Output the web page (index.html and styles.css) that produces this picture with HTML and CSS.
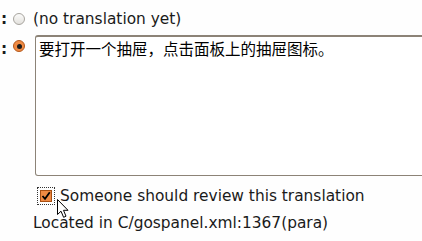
FILE: index.html
```html
<!DOCTYPE html>
<html>
<head>
<meta charset="utf-8">
<link rel="stylesheet" href="styles.css">
</head>
<body>
<div class="page">
  <div class="row row-top">
    <span class="colon">:</span>
    <span class="radio"></span>
    <span class="label">(no translation yet)</span>
  </div>
  <div class="row row-edit">
    <span class="colon">:</span>
    <span class="radio on"><span class="dot"></span></span>
    <div class="editor">要打开一个抽屉，点击面板上的抽屉图标。</div>
  </div>
  <div class="row row-check">
    <span class="focus"><span class="check">
      <svg width="10" height="10" viewBox="0 0 10 10"><path d="M1.5 5 L4 7.8 L8.8 1.2" fill="none" stroke="#000" stroke-width="1.8"/></svg>
    </span></span>
    <span class="label">Someone should review this translation</span>
  </div>
  <div class="located">Located in C/gospanel.xml:1367(para)</div>
  <svg class="cursor" width="14" height="20" viewBox="0 0 14 20"><path d="M0.5 0.5 L0.5 15.5 L4 12.2 L6.6 18.3 L9 17.2 L6.5 11.3 L11 11.3 Z" fill="#fff" stroke="#000" stroke-width="1"/></svg>
</div>
</body>
</html>
```
FILE: styles.css
```css
html, body {
  margin: 0;
  padding: 0;
  background: #fefefe;
  overflow: hidden;
}
.page {
  position: relative;
  width: 422px;
  height: 241px;
  font-family: "DejaVu Sans", sans-serif;
  font-size: 15.4px;
  color: #1a1a1a;
}
.row {
  display: flex;
}
.row-top {
  align-items: center;
  height: 26px;
  padding-top: 6px;
}
.colon {
  width: 13px;
  padding-left: 1px;
  font-weight: bold;
  box-sizing: border-box;
}
.radio {
  width: 12px;
  height: 12px;
  border-radius: 50%;
  border: 1px solid #a7a49e;
  background: linear-gradient(#fbfbfa, #e3e1dd);
  box-sizing: border-box;
  margin-right: 8px;
  display: flex;
  align-items: center;
  justify-content: center;
}
.radio.on {
  border-color: #b45a1e;
  background: #f08a43;
}
.radio .dot {
  width: 5px;
  height: 5px;
  border-radius: 50%;
  background: #1a1a1a;
}
.row-edit {
  align-items: flex-start;
  margin-top: 3px;
}
.row-edit .colon {
  margin-top: 6px;
  line-height: 16px;
}
.row-edit .radio {
  margin-top: 5px;
  margin-right: 10px;
}
.editor {
  flex: 1;
  height: 141px;
  margin-right: -20px;
  border: 1px solid #8c8377;
  border-top: 2px solid #8c8377;
  border-radius: 3px;
  box-sizing: border-box;
  padding: 1px 3px;
  font-family: "Noto Sans CJK SC", sans-serif;
  font-size: 15.5px;
  line-height: 20px;
  color: #000;
  background: #fff;
}
.row-check {
  align-items: center;
  margin-top: 11px;
  padding-left: 37px;
}
.focus {
  border: 1px dotted #333;
  padding: 2px;
  margin-right: 5px;
  display: flex;
}
.check {
  width: 12px;
  height: 12px;
  border: 1px solid #a84f12;
  background: #f08a43;
  box-sizing: border-box;
  display: flex;
  align-items: center;
  justify-content: center;
}
.located {
  margin-top: 9px;
  padding-left: 33px;
}
.cursor {
  position: absolute;
  left: 57px;
  top: 199px;
}
```
